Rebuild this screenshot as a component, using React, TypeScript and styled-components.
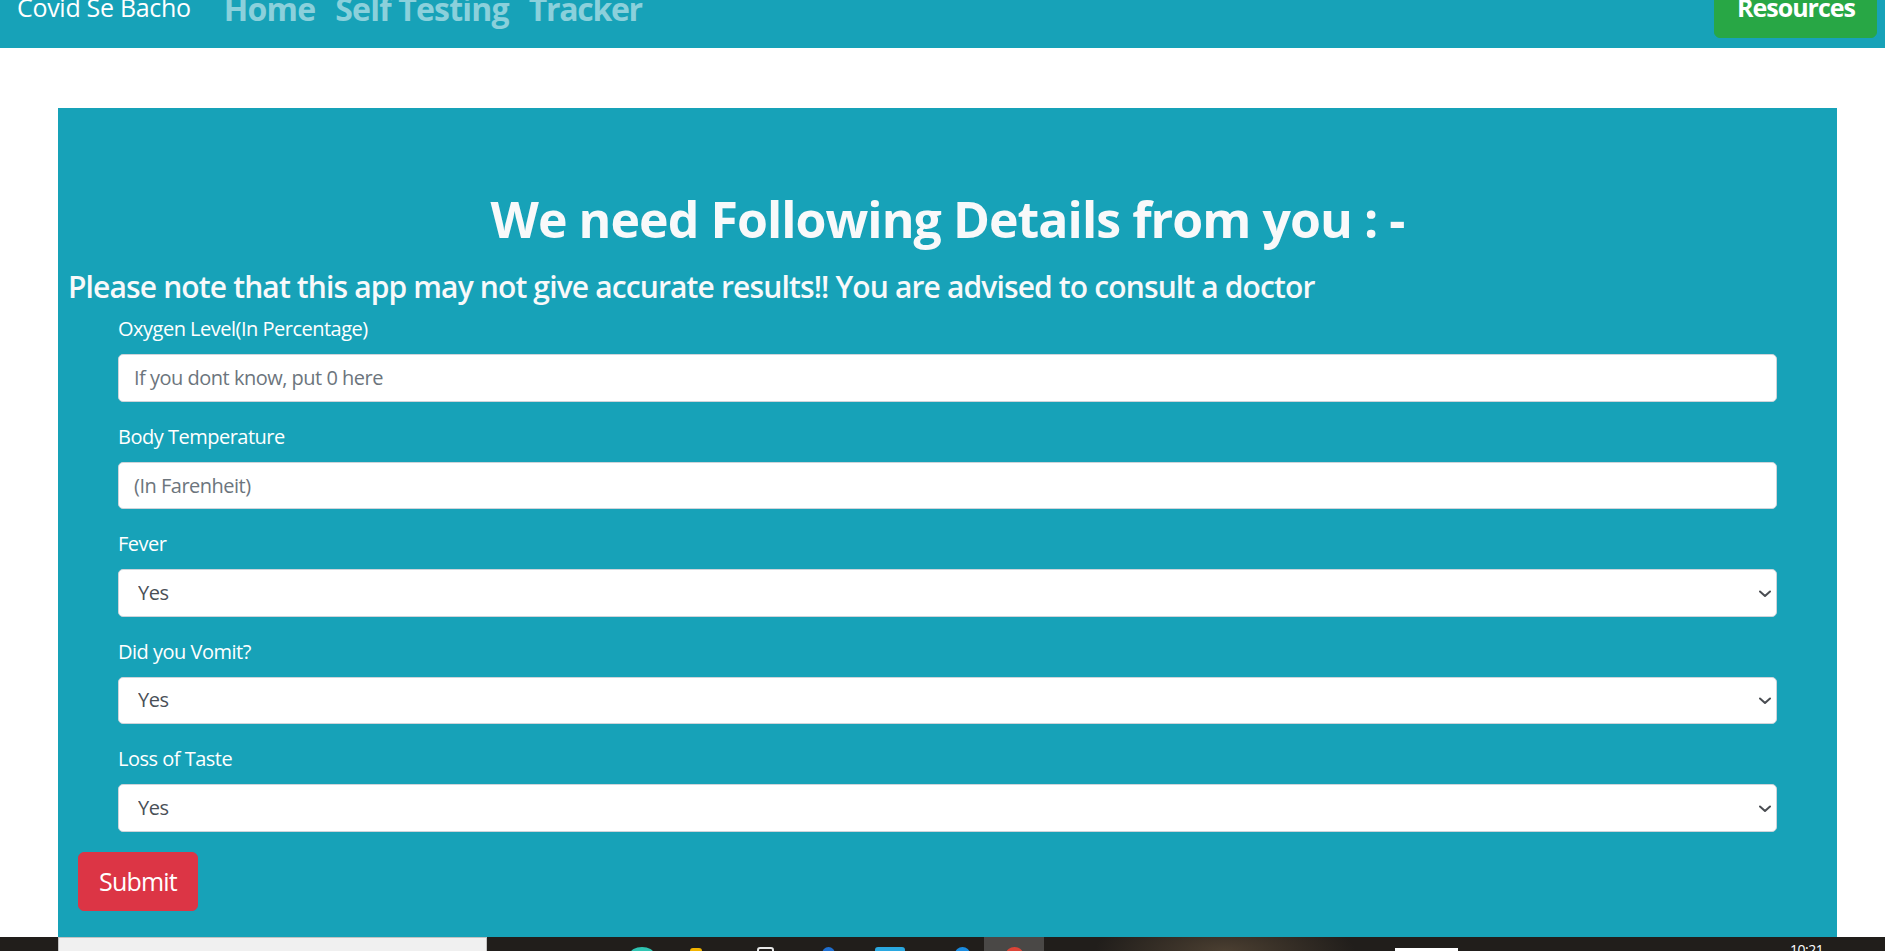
import React from "react";
import styled, { createGlobalStyle } from "styled-components";

const GlobalStyle = createGlobalStyle`
  html, body {
    margin: 0;
    padding: 0;
    overflow: hidden;
    background: #ffffff;
    font-family: "Open Sans", "Noto Sans", "Liberation Sans", sans-serif;
  }
  * { box-sizing: border-box; }
`;

const Page = styled.div`
  height: 951px;
  display: flex;
  flex-direction: column;
  overflow: hidden;
`;

const Navbar = styled.nav`
  height: 48px;
  flex-shrink: 0;
  display: flex;
  align-items: flex-start;
  padding: 0 8px 0 17px;
  background: #17a2b8;
  overflow: hidden;
`;

const Brand = styled.a`
  font-size: 25px;
  line-height: 30px;
  color: #ffffff;
  letter-spacing: -0.3px;
  margin-top: -8px;
  margin-right: 23px;
  white-space: nowrap;
`;

const NavLink = styled.a`
  font-size: 32px;
  font-weight: 700;
  line-height: 40px;
  letter-spacing: -0.8px;
  color: rgba(255, 255, 255, 0.5);
  padding: 0 10px;
  margin-top: -11px;
  white-space: nowrap;
`;

const TrackerLink = styled(NavLink)`
  letter-spacing: -1.3px;
`;

const ResourcesButton = styled.button`
  margin-left: auto;
  margin-top: -22px;
  background: #28a745;
  color: #ffffff;
  border: 1px solid #28a745;
  border-radius: 6px;
  font-family: inherit;
  font-size: 25px;
  font-weight: 700;
  letter-spacing: -1px;
  line-height: 37.5px;
  padding: 10px 21px 10px 22px;
`;

const Main = styled.main`
  flex: 1;
  display: flex;
  flex-direction: column;
  padding: 60px 48px 0 58px;
  min-height: 0;
`;

const Card = styled.section`
  flex: 1;
  background: #17a2b8;
  padding: 81px 10px 0;
  overflow: hidden;
`;

const Title = styled.h1`
  margin: 0 0 20px;
  font-size: 50px;
  font-weight: 700;
  line-height: 60px;
  letter-spacing: -0.95px;
  text-align: center;
  color: #f8f9fa;
`;

const Note = styled.h4`
  margin: 0 0 9px;
  font-size: 30px;
  font-weight: 600;
  line-height: 36px;
  letter-spacing: -0.86px;
  color: #f8f9fa;
  white-space: nowrap;
`;

const Form = styled.form`
  padding: 0 50px;
`;

const Group = styled.div`
  margin-bottom: 20px;
`;

const Label = styled.label`
  display: block;
  font-size: 20px;
  line-height: 30px;
  letter-spacing: -0.5px;
  margin-bottom: 10px;
  color: #ffffff;
`;

const fieldBase = `
  display: block;
  width: 100%;
  height: 47.5px;
  padding: 7.5px 15px;
  font-family: inherit;
  font-size: 20px;
  letter-spacing: -0.5px;
  line-height: 30px;
  color: #495057;
  background: #ffffff;
  border: 1.25px solid #ced4da;
  border-radius: 5px;
`;

const Input = styled.input`
  ${fieldBase}
  &::placeholder {
    color: #6c757d;
    opacity: 1;
  }
`;

const SelectWrap = styled.div`
  position: relative;
`;

const Select = styled.select`
  ${fieldBase}
  appearance: none;
  -webkit-appearance: none;
  padding-left: 19px;
  padding-right: 36px;
`;

const Chevron = styled.svg`
  position: absolute;
  right: 6px;
  top: 50%;
  width: 12px;
  height: 8px;
  margin-top: -3px;
  pointer-events: none;
`;

const SubmitButton = styled.button`
  margin-left: 10px;
  background: #dc3545;
  color: #ffffff;
  border: 1.25px solid #dc3545;
  border-radius: 6px;
  font-family: inherit;
  font-size: 25px;
  letter-spacing: -0.8px;
  line-height: 37.5px;
  padding: 10px 20px;
`;

const Taskbar = styled.footer`
  height: 14px;
  flex-shrink: 0;
  display: flex;
  align-items: flex-start;
  overflow: hidden;
  background:
    radial-gradient(ellipse 130px 40px at 1225px 100%, #4b3f31 0%, rgba(33, 30, 27, 0) 100%),
    #211e1b;
`;

const StartArea = styled.div`
  width: 58px;
  flex-shrink: 0;
`;

const SearchBox = styled.div`
  width: 429px;
  height: 14px;
  flex-shrink: 0;
  background: #f0f0f0;
  border: 1px solid #c3c3c3;
  border-bottom: none;
`;

const TaskIcon = styled.span<{ $w: number; $left: number; $top: number; $color: string; $round?: boolean; $outline?: boolean }>`
  display: block;
  flex-shrink: 0;
  width: ${(p) => p.$w}px;
  height: 14px;
  margin-left: ${(p) => p.$left}px;
  margin-top: ${(p) => p.$top}px;
  background: ${(p) => (p.$outline ? "transparent" : p.$color)};
  border: ${(p) => (p.$outline ? `2px solid ${p.$color}` : "none")};
  border-radius: ${(p) => (p.$round ? "50% 50% 0 0" : "3px 3px 0 0")};
`;

const ActiveSlot = styled.div`
  width: 60px;
  height: 14px;
  margin-left: 14px;
  flex-shrink: 0;
  display: flex;
  justify-content: center;
  background: #4a4846;
`;

const TrayBox = styled.span`
  width: 63px;
  height: 14px;
  margin-left: 351px;
  margin-top: 11px;
  background: #ffffff;
  flex-shrink: 0;
`;

const Clock = styled.span`
  margin-left: 332px;
  margin-top: 6px;
  font-family: "Open Sans", sans-serif;
  font-size: 14px;
  line-height: 14px;
  color: #ffffff;
  letter-spacing: -0.5px;
`;

const fields = [
  { label: "Oxygen Level(In Percentage)", placeholder: "If you dont know, put 0 here" },
  { label: "Body Temperature", placeholder: "(In Farenheit)" },
];

const selects = ["Fever", "Did you Vomit?", "Loss of Taste"];

export default function App() {
  return (
    <>
      <GlobalStyle />
      <Page>
        <Navbar>
          <Brand>Covid Se Bacho</Brand>
          <NavLink>Home</NavLink>
          <NavLink>Self Testing</NavLink>
          <TrackerLink>Tracker</TrackerLink>
          <ResourcesButton>Resources</ResourcesButton>
        </Navbar>
        <Main>
          <Card>
            <Title>We need Following Details from you : -</Title>
            <Note>
              Please note that this app may not give accurate results!! You are advised to consult a doctor
            </Note>
            <Form onSubmit={(e) => e.preventDefault()}>
              {fields.map((f) => (
                <Group key={f.label}>
                  <Label>{f.label}</Label>
                  <Input type="text" placeholder={f.placeholder} />
                </Group>
              ))}
              {selects.map((s) => (
                <Group key={s}>
                  <Label>{s}</Label>
                  <SelectWrap>
                    <Select defaultValue="Yes">
                      <option>Yes</option>
                      <option>No</option>
                    </Select>
                    <Chevron viewBox="0 0 12 8" aria-hidden="true">
                      <path d="M1 1.5 L6 6 L11 1.5" fill="none" stroke="#4a4d52" strokeWidth="2" strokeLinecap="round" strokeLinejoin="round" />
                    </Chevron>
                  </SelectWrap>
                </Group>
              ))}
            </Form>
            <SubmitButton type="button">Submit</SubmitButton>
          </Card>
        </Main>
        <Taskbar>
          <StartArea />
          <SearchBox />
          <TaskIcon $w={24} $left={143} $top={10} $color="#2fc4b2" $round />
          <TaskIcon $w={12} $left={36} $top={11} $color="#f2b400" />
          <TaskIcon $w={17} $left={55} $top={10} $color="#e8e8e8" $outline />
          <TaskIcon $w={13} $left={48} $top={10} $color="#1f6fd0" $round />
          <TaskIcon $w={30} $left={40} $top={10} $color="#2aa8e0" />
          <TaskIcon $w={15} $left={50} $top={10} $color="#1a8ce0" $round />
          <ActiveSlot>
            <TaskIcon $w={17} $left={0} $top={10} $color="#db4437" $round />
          </ActiveSlot>
          <TrayBox />
          <Clock>10:21</Clock>
        </Taskbar>
      </Page>
    </>
  );
}
